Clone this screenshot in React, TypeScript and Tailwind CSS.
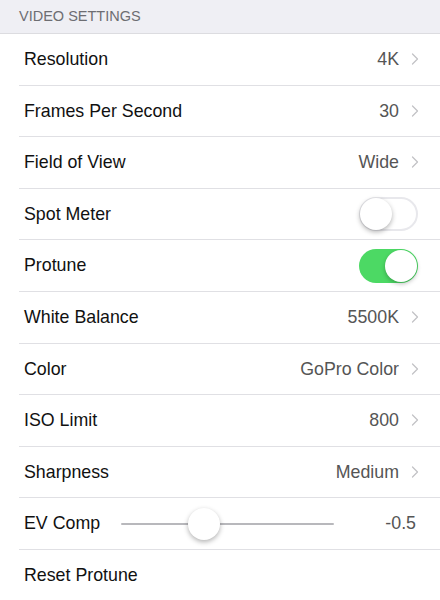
import { ChevronRight } from "lucide-react";

type Row =
	| { kind: "value"; label: string; value: string }
	| { kind: "toggle"; label: string; on: boolean }
	| { kind: "slider"; label: string; value: string; pct: number }
	| { kind: "action"; label: string };

const rows: Row[] = [
	{ kind: "value", label: "Resolution", value: "4K" },
	{ kind: "value", label: "Frames Per Second", value: "30" },
	{ kind: "value", label: "Field of View", value: "Wide" },
	{ kind: "toggle", label: "Spot Meter", on: false },
	{ kind: "toggle", label: "Protune", on: true },
	{ kind: "value", label: "White Balance", value: "5500K" },
	{ kind: "value", label: "Color", value: "GoPro Color" },
	{ kind: "value", label: "ISO Limit", value: "800" },
	{ kind: "value", label: "Sharpness", value: "Medium" },
	{ kind: "slider", label: "EV Comp", value: "-0.5", pct: 39 },
	{ kind: "action", label: "Reset Protune" },
];

function Toggle({ on }: { on: boolean }) {
	return (
		<div
			className={
				on
					? "relative h-[34px] w-[59px] rounded-full bg-[#4cd964]"
					: "relative h-[34px] w-[59px] rounded-full border-2 border-[#e8e8ec] bg-white"
			}
		>
			<div
				className={
					on
						? "absolute right-[1px] top-[1px] h-[32px] w-[32px] rounded-full bg-white shadow-[0_2px_4px_rgba(0,0,0,0.25)]"
						: "absolute left-[-1px] top-[-1px] h-[32px] w-[32px] rounded-full bg-white shadow-[0_2px_5px_rgba(0,0,0,0.3)]"
				}
			/>
		</div>
	);
}

function Slider({ pct }: { pct: number }) {
	return (
		<div className="relative ml-[21px] h-[34px] w-[213px] shrink-0">
			<div className="absolute left-0 right-0 top-[16px] h-[2px] rounded bg-[#b8b8bc]" />
			<div
				className="absolute top-[1px] h-[32px] w-[32px] -translate-x-1/2 rounded-full bg-white shadow-[0_2px_5px_rgba(0,0,0,0.3)]"
				style={{ left: `${pct}%` }}
			/>
		</div>
	);
}

export default function App() {
	return (
		<div
			className="h-[600px] w-[440px] overflow-hidden bg-white"
			style={{ fontFamily: "'Liberation Sans', Arial, sans-serif" }}
		>
			<div className="flex h-[34px] items-center border-b border-[#dcdce0] bg-[#efeff4] pl-[19px] pt-[1px] text-[14.5px] text-[#6d6d72]">
				VIDEO SETTINGS
			</div>
			{rows.map((row) => (
				<div key={row.label} className="pl-[19px]">
					<div className="flex h-[51.6px] items-center border-b border-[#e0e0e4] pl-[5px] pr-[20px]">
						<span className="shrink-0 text-[17.8px] text-[#111]">{row.label}</span>
						{row.kind === "value" && (
							<div className="ml-auto flex items-center gap-[6px]">
								<span className="text-[17.8px] text-[#555]">{row.value}</span>
								<ChevronRight className="mr-[-5px] h-[20px] w-[20px] text-[#c2c2c6]" strokeWidth={1.5} />
							</div>
						)}
						{row.kind === "toggle" && (
							<div className="ml-auto mr-[2px]">
								<Toggle on={row.on} />
							</div>
						)}
						{row.kind === "slider" && (
							<>
								<Slider pct={row.pct} />
								<span className="ml-auto mr-[4px] text-[17.8px] text-[#555]">{row.value}</span>
							</>
						)}
					</div>
				</div>
			))}
		</div>
	);
}
